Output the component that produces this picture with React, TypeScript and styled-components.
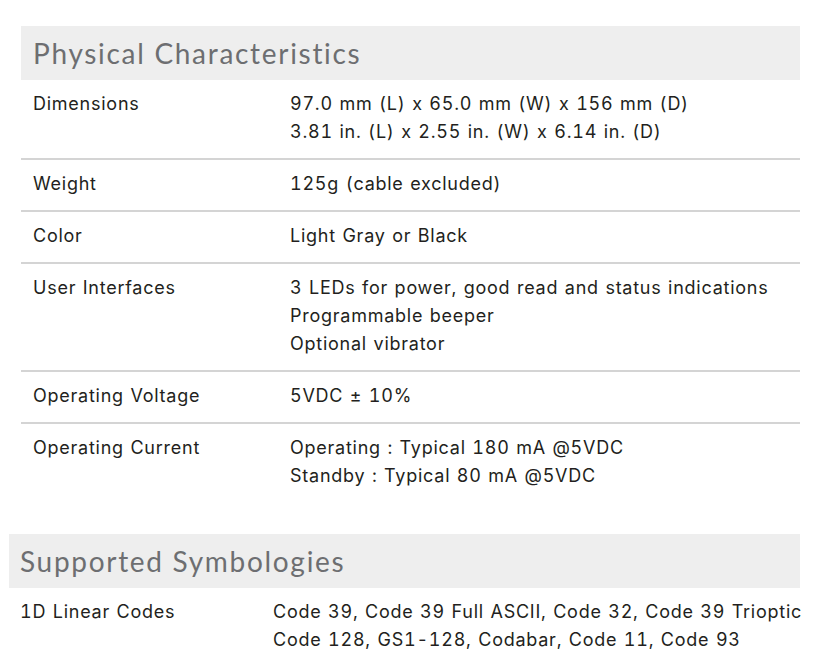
import React from "react";
import styled, { createGlobalStyle } from "styled-components";

const Global = createGlobalStyle`
  html, body { margin: 0; padding: 0; background: #ffffff; }
  body { font-family: Inter, "Liberation Sans", sans-serif; color: #231f20; }
`;

const Page = styled.div`
  width: 830px;
  padding-top: 26px;
  display: flex;
  flex-direction: column;
  gap: 32px;
`;

const Section = styled.section<{ $indent: number }>`
  margin-left: ${(p) => p.$indent}px;
  width: ${(p) => 800 - p.$indent}px;
`;

const Header = styled.h2<{ $pad: number }>`
  margin: 0;
  height: 54px;
  background: #eeeeee;
  display: flex;
  align-items: center;
  padding-left: ${(p) => p.$pad}px;
  font-family: Lato, "Open Sans", sans-serif;
  font-weight: 400;
  font-size: 28px;
  color: #6d6e71;
  letter-spacing: 1.7px;
`;

const Row = styled.div<{ $pad: number; $label: number; $divider: boolean }>`
  display: grid;
  grid-template-columns: ${(p) => p.$label}px 1fr;
  padding: 10px 0 12px ${(p) => p.$pad}px;
  border-bottom: ${(p) => (p.$divider ? "2px solid #d4d4d4" : "none")};
  font-size: 18px;
  line-height: 28px;
  letter-spacing: 0.75px;
  word-spacing: 1px;
  white-space: nowrap;
  font-variant-numeric: tabular-nums;
`;

const Label = styled.div``;
const Value = styled.div`
  display: flex;
  flex-direction: column;
`;

type Spec = { label: string; lines: string[] };

const physical: Spec[] = [
  {
    label: "Dimensions",
    lines: ["97.0 mm (L) x 65.0 mm (W) x 156 mm (D)", "3.81 in. (L) x 2.55 in. (W) x 6.14 in. (D)"],
  },
  { label: "Weight", lines: ["125g (cable excluded)"] },
  { label: "Color", lines: ["Light Gray or Black"] },
  {
    label: "User Interfaces",
    lines: ["3 LEDs for power, good read and status indications", "Programmable beeper", "Optional vibrator"],
  },
  { label: "Operating Voltage", lines: ["5VDC ± 10%"] },
  { label: "Operating Current", lines: ["Operating : Typical 180 mA @5VDC", "Standby : Typical 80 mA @5VDC"] },
];

const symbologies: Spec[] = [
  {
    label: "1D Linear Codes",
    lines: ["Code 39, Code 39 Full ASCII, Code 32, Code 39 Trioptic", "Code 128, GS1-128, Codabar, Code 11, Code 93"],
  },
];

function SpecTable({ title, specs, indent, pad, label, dividers }: { title: string; specs: Spec[]; indent: number; pad: number; label: number; dividers: boolean }) {
  return (
    <Section $indent={indent}>
      <Header $pad={pad}>{title}</Header>
      {specs.map((s, i) => (
        <Row key={s.label} $pad={pad} $label={label} $divider={dividers && i < specs.length - 1}>
          <Label>{s.label}</Label>
          <Value>
            {s.lines.map((l) => (
              <span key={l}>{l}</span>
            ))}
          </Value>
        </Row>
      ))}
    </Section>
  );
}

export default function App() {
  return (
    <>
      <Global />
      <Page>
        <SpecTable title="Physical Characteristics" specs={physical} indent={21} pad={12} label={257} dividers />
        <SpecTable title="Supported Symbologies" specs={symbologies} indent={9} pad={11} label={253} dividers />
      </Page>
    </>
  );
}
